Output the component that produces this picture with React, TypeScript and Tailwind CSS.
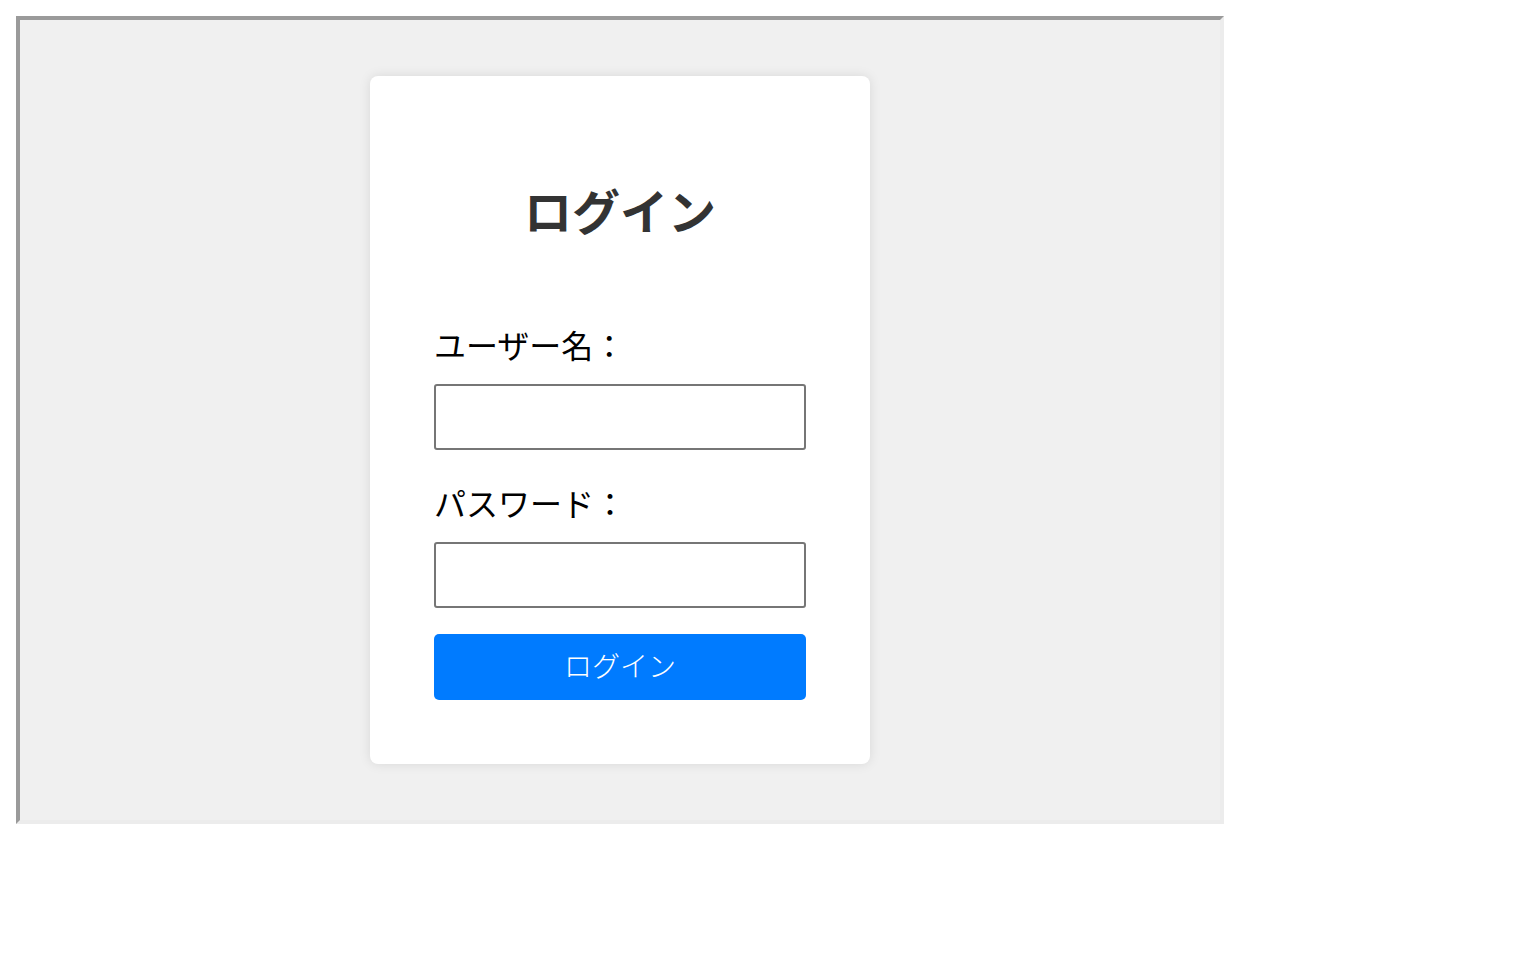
export default function App() {
  return (
    <div className="min-h-screen bg-white pl-4 pt-4" style={{ fontFamily: '"Noto Sans CJK JP", "Noto Sans", sans-serif' }}>
      <div className="box-border h-[808px] w-[1208px] border-4 border-t-[#9a9a9a] border-l-[#9a9a9a] border-r-[#ececec] border-b-[#ececec] bg-[#f0f0f0]">
        <div className="flex justify-center pt-[56px]">
          <div className="w-[500px] rounded-lg bg-white px-16 pb-16 pt-16 shadow-[0_0_12px_rgba(0,0,0,0.1)]">
            <h2 className="mt-[37px] text-center text-[48px] font-bold leading-[64px] text-[#333]">ログイン</h2>
            <form className="mt-[80px] flex flex-col">
              <label className="text-[32px] leading-[46px] text-black">ユーザー名：</label>
              <input className="mt-[17px] h-[66px] w-full rounded-[3px] border-2 border-[#767676] bg-white px-2 text-[24px] outline-none" />
              <label className="mt-[29px] text-[32px] leading-[46px] text-black">パスワード：</label>
              <input type="password" className="mt-[17px] h-[66px] w-full rounded-[3px] border-2 border-[#767676] bg-white px-2 text-[24px] outline-none" />
              <button type="button" className="mt-[26px] h-[66px] w-full rounded-[5px] bg-[#007bff] pb-1 text-[28px] font-light leading-none text-white">
                ログイン
              </button>
            </form>
          </div>
        </div>
      </div>
    </div>
  );
}
